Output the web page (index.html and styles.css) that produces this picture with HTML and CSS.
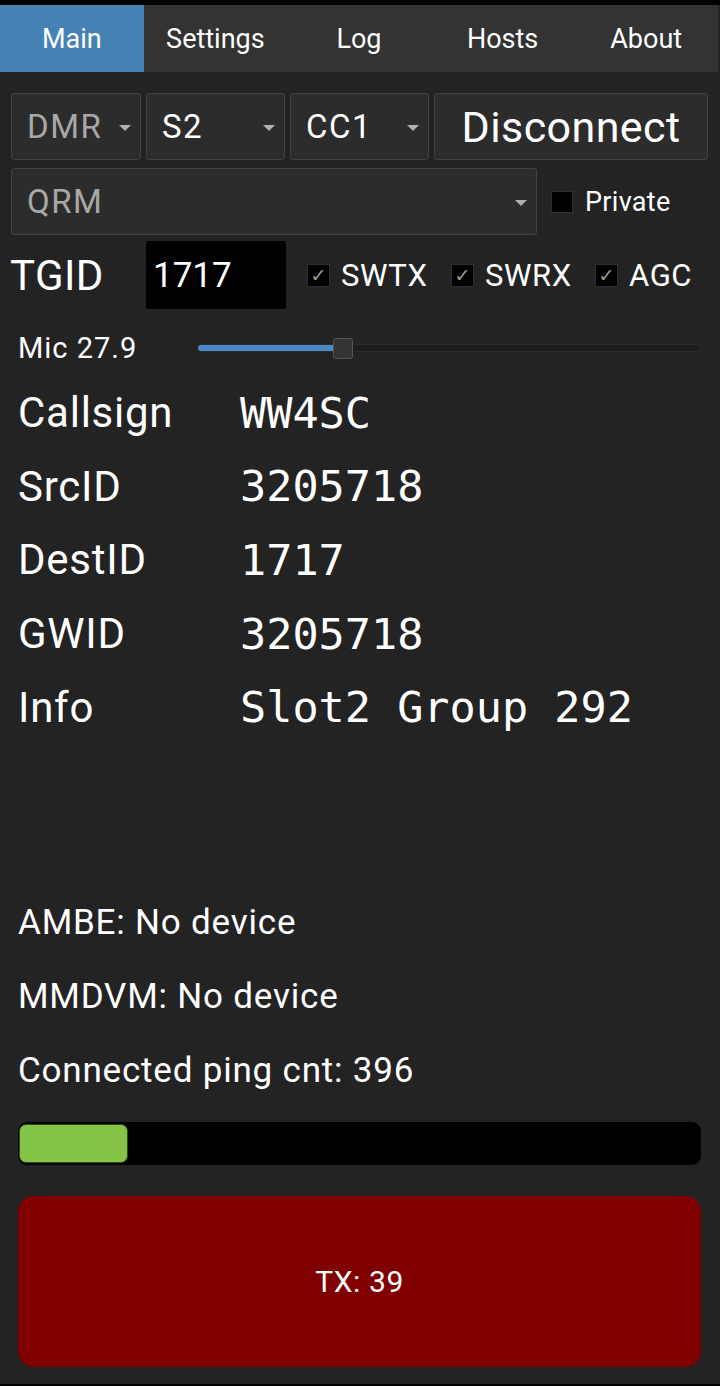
FILE: index.html
```html
<html>
<head>
<title>DROID-Star</title>
<link rel="stylesheet" href="styles.css">
</head>
<body>
<div class='screen'>
<div class='tabs'>
<div class='tab active'>Main</div>
<div class='tab'>Settings</div>
<div class='tab'>Log</div>
<div class='tab'>Hosts</div>
<div class='tab'>About</div>
</div>

<div class='main'>
<div class='row1'>
<div class='combo dim w-mode'>DMR<span class='arrow'></span></div>
<div class='combo w-slot'>S2<span class='arrow'></span></div>
<div class='combo w-cc'>CC1<span class='arrow'></span></div>
<div class='button w-conn'>Disconnect</div>
</div>

<div class='row2'>
<div class='combo dim w-host'>QRM<span class='arrow'></span></div>
<div class='check private'><span class='box'></span><span class='ctext'>Private</span></div>
</div>

<div class='row3'>
<div class='tgid'>TGID</div>
<div class='tginput'>1717</div>
<div class='checks'>
<div class='check item'><span class='box'>&#10003;</span><span class='ctext'>SWTX</span></div>
<div class='check item'><span class='box'>&#10003;</span><span class='ctext'>SWRX</span></div>
<div class='check'><span class='box'>&#10003;</span><span class='ctext'>AGC</span></div>
</div>
</div>

<div class='mic'>
<div class='miclabel'>Mic 27.9</div>
<div class='slider'>
<div class='track'><div class='fill' style='width:136px'></div></div>
<div class='handle' style='left:136px'></div>
</div>
</div>

<div class='data'>
<div class='drow'><span class='dlabel'>Callsign</span><span class='dval'>WW4SC</span></div>
<div class='drow'><span class='dlabel'>SrcID</span><span class='dval'>3205718</span></div>
<div class='drow'><span class='dlabel'>DestID</span><span class='dval'>1717</span></div>
<div class='drow'><span class='dlabel'>GWID</span><span class='dval'>3205718</span></div>
<div class='drow'><span class='dlabel'>Info</span><span class='dval'>Slot2 Group 292</span></div>
</div>

<div class='status'>
<div class='srow'>AMBE: No device</div>
<div class='srow'>MMDVM: No device</div>
<div class='srow'>Connected ping cnt: 396</div>
</div>

<div class='progress'><div class='pfill' style='width:109px'></div></div>

<div class='tx'>TX: 39</div>
</div>
</div>
</body>
</html>
```

FILE: styles.css
```css
body
{
	margin:0px;
	background:#000000;
	font-family:Roboto, "Noto Sans", sans-serif;
	color:#ffffff;
}
.screen
{
	width:720px;
	height:1384px;
	border-top:5px #000000 solid;
	box-sizing:border-box;
	background:#232323;
	display:flex;
	flex-direction:column;
}
.tabs
{
	display:flex;
	height:67px;
	background:#333333;
	margin-right:2px;
}
.tab
{
	flex:1;
	display:flex;
	align-items:center;
	justify-content:center;
	font-size:27px;
}
.tab.active
{
	background:#4682b4;
}
.main
{
	display:flex;
	flex-direction:column;
	padding-top:21px;
}
.row1
{
	display:flex;
	gap:5px;
	margin-left:11px;
	height:67px;
}
.combo, .button
{
	position:relative;
	box-sizing:border-box;
	height:67px;
	background:#2c2c2c;
	border:1px #414141 solid;
	border-radius:3px;
	display:flex;
	align-items:center;
	padding-left:15px;
	font-size:33px;
	letter-spacing:1.5px;
}
.dim
{
	color:#a8a8a8;
}
.arrow
{
	position:absolute;
	right:9px;
	top:31px;
	width:0px;
	height:0px;
	border-left:6px transparent solid;
	border-right:6px transparent solid;
	border-top:6px #b0b0b0 solid;
}
.w-mode { width:130px; }
.w-slot { width:139px; }
.w-cc { width:139px; }
.w-conn
{
	width:274px;
	padding-left:0px;
	justify-content:center;
	font-size:43px;
	letter-spacing:0.4px;
}
.w-host { width:526px; }
.row2
{
	display:flex;
	align-items:center;
	margin-top:8px;
	margin-left:11px;
	height:67px;
}
.check
{
	display:flex;
	align-items:center;
}
.box
{
	box-sizing:border-box;
	width:23px;
	height:23px;
	background:#000000;
	border:1px #2e2e2e solid;
	color:#9a9a9a;
	font-size:19px;
	font-family:"DejaVu Sans", sans-serif;
	font-weight:bold;
	display:flex;
	align-items:center;
	justify-content:center;
}
.ctext
{
	margin-left:11px;
	font-size:31px;
	letter-spacing:0.6px;
}
.private
{
	margin-left:14px;
}
.private .box
{
	width:22px;
	height:22px;
}
.private .ctext
{
	margin-left:12px;
	font-size:27px;
	letter-spacing:0.3px;
}
.row3
{
	display:flex;
	align-items:center;
	margin-top:6px;
	margin-left:10px;
	height:68px;
}
.tgid
{
	width:136px;
	font-size:42px;
	letter-spacing:0.4px;
}
.tginput
{
	box-sizing:border-box;
	width:140px;
	height:68px;
	background:#000000;
	border-radius:2px;
	padding-left:7px;
	font-size:35px;
	display:flex;
	align-items:center;
}
.checks
{
	display:flex;
	margin-left:21px;
}
.checks .item
{
	width:144px;
}
.mic
{
	display:flex;
	align-items:center;
	margin-top:17px;
	margin-left:18px;
	height:44px;
}
.miclabel
{
	width:179px;
	font-size:29px;
	letter-spacing:1px;
}
.slider
{
	position:relative;
	width:504px;
	height:22px;
	display:flex;
	align-items:center;
}
.track
{
	box-sizing:border-box;
	width:504px;
	height:8px;
	background:#1c1c1c;
	border:1px #2c2c2c solid;
	border-radius:4px;
	overflow:hidden;
}
.fill
{
	height:100%;
	background:#4a8ac8;
}
.handle
{
	position:absolute;
	top:1px;
	box-sizing:border-box;
	width:20px;
	height:21px;
	background:#333333;
	border:1px #555555 solid;
	border-radius:3px;
}
.data
{
	margin-top:6px;
	margin-left:18px;
}
.drow
{
	height:73.6px;
	display:flex;
	align-items:center;
}
.dlabel
{
	width:222px;
	font-size:42px;
	letter-spacing:0.75px;
}
.dval
{
	font-family:"DejaVu Sans Mono", monospace;
	font-size:43.5px;
}
.status
{
	margin-top:142px;
	margin-left:18px;
}
.srow
{
	height:74px;
	display:flex;
	align-items:center;
	font-size:35px;
	letter-spacing:0.8px;
}
.progress
{
	box-sizing:border-box;
	margin-top:14px;
	margin-left:18px;
	width:683px;
	height:43px;
	background:#000000;
	border-radius:9px;
	padding:2px 1px;
}
.pfill
{
	height:100%;
	background:#84c447;
	border:1px #2a4a10 solid;
	box-sizing:border-box;
	border-radius:7px;
}
.tx
{
	margin-top:31px;
	margin-left:18px;
	width:683px;
	height:171px;
	background:#800000;
	border-radius:16px;
	display:flex;
	align-items:center;
	justify-content:center;
	font-size:30px;
	letter-spacing:0.6px;
}
```
